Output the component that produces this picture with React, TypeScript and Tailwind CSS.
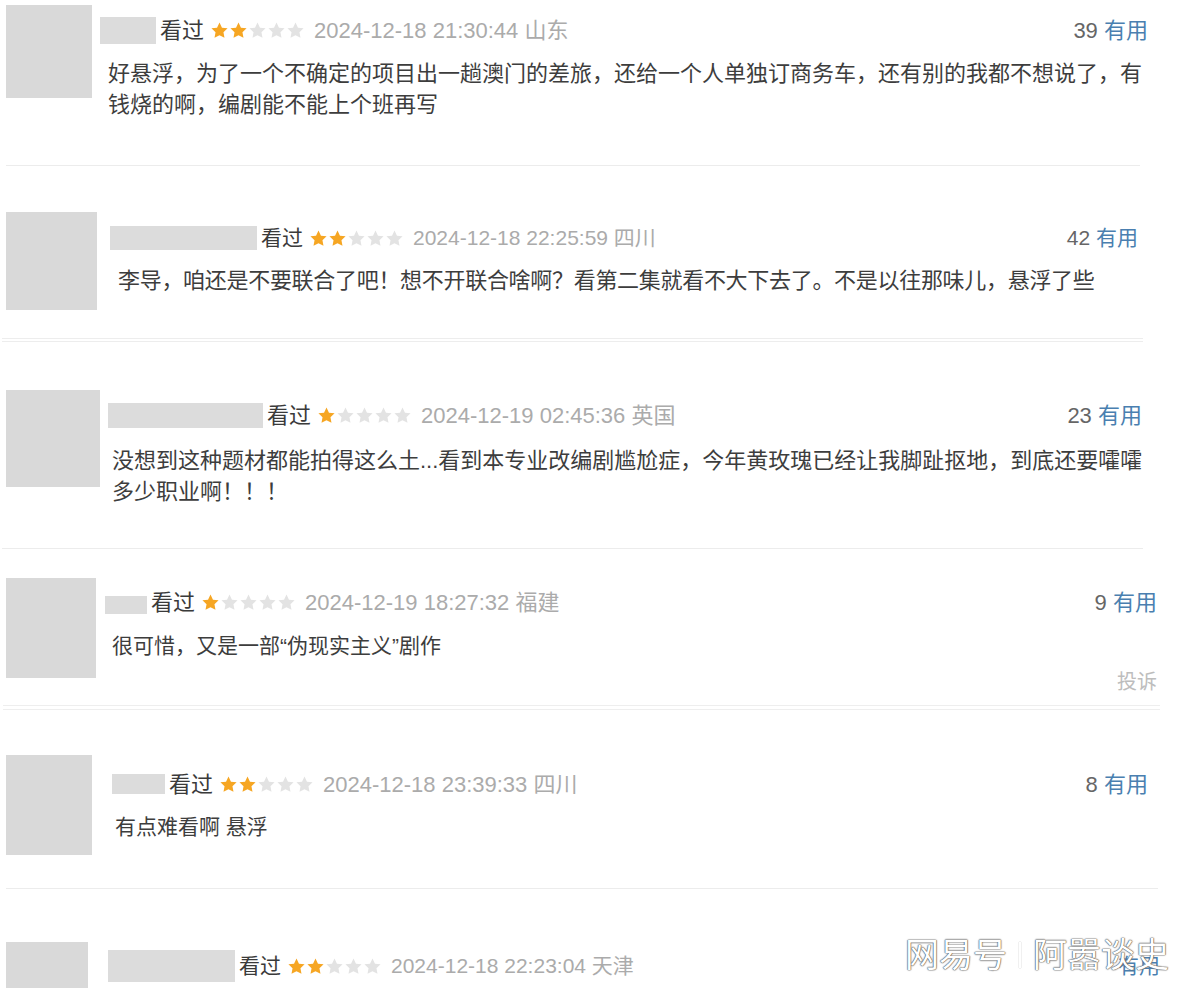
import React from "react";

type Block = {
  wrap: string;
  avatar: string;
  body: string;
  head: string;
  box: string;
  stars: number;
  date: string;
  count: string;
  text: string;
  lines: string[];
  report?: boolean;
  line: string;
};

const blocks: Block[] = [
  {
    wrap: "h-[165px] pt-[5px]",
    avatar: "ml-[6px] w-[86px] h-[93px]",
    body: "ml-[8px] pr-[52px] text-[22px]",
    head: "mt-[12px] h-[27px]",
    box: "w-[56px] h-[27px]",
    stars: 2,
    date: "2024-12-18 21:30:44 山东",
    count: "39",
    text: "mt-[14px] ml-[8px] text-[22px] leading-[31px]",
    lines: [
      "好悬浮，为了一个不确定的项目出一趟澳门的差旅，还给一个人单独订商务车，还有别的我都不想说了，有",
      "钱烧的啊，编剧能不能上个班再写",
    ],
    line: "ml-[6px] w-[1134px] h-[1px] border-t border-[#ececec]",
  },
  {
    wrap: "h-[172px] pt-[46px]",
    avatar: "ml-[6px] w-[91px] h-[98px]",
    body: "ml-[13px] pr-[62px] text-[21px]",
    head: "mt-[14px] h-[24px]",
    box: "w-[147px] h-[24px]",
    stars: 2,
    date: "2024-12-18 22:25:59 四川",
    count: "42",
    text: "mt-[16px] ml-[8px] text-[22px] tracking-[-0.3px] leading-[30px]",
    lines: ["李导，咱还是不要联合了吧！想不开联合啥啊？看第二集就看不大下去了。不是以往那味儿，悬浮了些"],
    line: "ml-[2px] w-[1141px] h-[4px] border-y border-[#ededed]",
  },
  {
    wrap: "h-[206px] pt-[48px]",
    avatar: "ml-[6px] w-[94px] h-[97px]",
    body: "ml-[8px] pr-[58px] text-[22px]",
    head: "mt-[13px] h-[25px]",
    box: "w-[155px] h-[25px]",
    stars: 1,
    date: "2024-12-19 02:45:36 英国",
    count: "23",
    text: "mt-[17px] ml-[4px] text-[22px] leading-[31px]",
    lines: [
      "没想到这种题材都能拍得这么土...看到本专业改编剧尴尬症，今年黄玫瑰已经让我脚趾抠地，到底还要嚯嚯",
      "多少职业啊！！！",
    ],
    line: "ml-[2px] w-[1141px] h-[1px] border-t border-[#ececec]",
  },
  {
    wrap: "h-[156px] pt-[29px]",
    avatar: "ml-[6px] w-[90px] h-[100px]",
    body: "ml-[9px] pr-[43px] text-[22px]",
    head: "mt-[12px] h-[24px]",
    box: "w-[42px] h-[18px] self-end",
    stars: 1,
    date: "2024-12-19 18:27:32 福建",
    count: "9",
    text: "mt-[17px] ml-[7px] text-[21px] leading-[30px]",
    lines: ["很可惜，又是一部“伪现实主义”剧作"],
    report: true,
    line: "ml-[3px] w-[1157px] h-[5px] border-y border-[#eeeeee]",
  },
  {
    wrap: "h-[178px] pt-[45px]",
    avatar: "ml-[6px] w-[86px] h-[100px]",
    body: "ml-[20px] pr-[52px] text-[22px]",
    head: "mt-[17px] h-[24px]",
    box: "w-[53px] h-[20px]",
    stars: 2,
    date: "2024-12-18 23:39:33 四川",
    count: "8",
    text: "mt-[16px] ml-[3px] text-[21px] leading-[30px]",
    lines: ["有点难看啊 悬浮"],
    line: "ml-[6px] w-[1152px] h-[1px] border-t border-[#ececec]",
  },
  {
    wrap: "h-[99px] pt-[53px]",
    avatar: "ml-[6px] w-[82px] h-[60px]",
    body: "ml-[20px] pr-[40px] text-[21px]",
    head: "mt-[8px] h-[32px]",
    box: "w-[127px] h-[32px]",
    stars: 2,
    date: "2024-12-18 22:23:04 天津",
    count: "",
    text: "hidden",
    lines: [],
    line: "hidden",
  },
];

function Star({ on }: { on: boolean }) {
  return (
    <svg viewBox="0 0 24 24" className="w-[19px] h-[19px]">
      <path
        d="M12 1.8l3.1 6.6 7.1.9-5.2 4.9 1.3 7.1L12 17.9l-6.3 3.4 1.3-7.1-5.2-4.9 7.1-.9z"
        fill={on ? "#f6a623" : "#e3e3e3"}
      />
    </svg>
  );
}

function Comment({ b }: { b: Block }) {
  return (
    <>
      <div className={"flex items-start " + b.wrap}>
        <div className={"shrink-0 bg-[#d9d9d9] " + b.avatar} />
        <div className={"flex-1 min-w-0 flex flex-col " + b.body}>
          <div className={"flex items-center " + b.head}>
            <div className={"shrink-0 bg-[#dcdcdc] " + b.box} />
            <span className="ml-[4px] text-[#3a3a3a]">看过</span>
            <span className="ml-[6px] flex">
              {[0, 1, 2, 3, 4].map((i) => (
                <Star key={i} on={i < b.stars} />
              ))}
            </span>
            <span className="ml-[9px] text-[#ababab]">{b.date}</span>
            <span className="ml-auto text-[#666]">
              {b.count} <span className="text-[#4a7fb0]">有用</span>
            </span>
          </div>
          <div className={"text-[#3d3d3d] whitespace-nowrap " + b.text}>
            {b.lines.map((l, i) => (
              <div key={i}>{l}</div>
            ))}
          </div>
          {b.report && (
            <div className="mt-[6px] self-end text-[20px] text-[#bdbdbd]">投诉</div>
          )}
        </div>
      </div>
      <div className={b.line} />
    </>
  );
}

export default function App() {
  return (
    <div className="relative w-[1200px] h-[988px] overflow-hidden bg-white font-['Liberation_Sans','Noto_Sans_CJK_SC',sans-serif]">
      {blocks.map((b, i) => (
        <Comment key={i} b={b} />
      ))}
      {/* watermark over the last row */}
      <div className="absolute left-[905px] top-[935px] flex items-center text-[34px] leading-[40px] text-white [text-shadow:0_0_1px_#444,0_0_1px_#444,0_0_2px_#888]">
        <span>网易号</span>
        <span className="mx-[12px] inline-block w-[2px] h-[26px] bg-white [box-shadow:0_0_1px_#666]" />
        <span>阿嚣谈史</span>
      </div>
    </div>
  );
}
